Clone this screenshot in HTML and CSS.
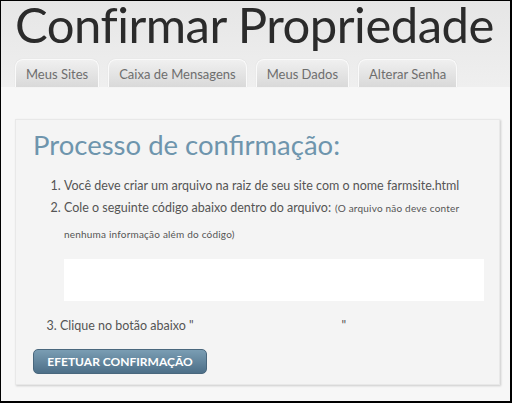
FILE: index.html
```html
<!DOCTYPE html>
<html lang="pt-BR">
<head>
    <meta charset="UTF-8">
    <meta name="viewport" content="width=device-width, initial-scale=1.0">
    <title>Confirmar Propriedade</title>
    <link rel="stylesheet" href="styles.css">
</head>
<body>
    <div class="header">
        <h1>Confirmar Propriedade</h1>
        <div class="tabs">
            <a href="#" class="tab">Meus Sites</a>
            <a href="#" class="tab">Caixa de Mensagens</a>
            <a href="#" class="tab">Meus Dados</a>
            <a href="#" class="tab">Alterar Senha</a>
        </div>
    </div>

    <div class="content">
        <div class="card">
            <h2>Processo de confirmação:</h2>
            <ol class="steps">
                <li>Você deve criar um arquivo na raiz de seu site com o nome farmsite.html</li>
                <li class="two">Cole o seguinte código abaixo dentro do arquivo:<small>(O arquivo não deve conter nenhuma informação além do código)</small>
                    <div class="code-box"></div>
                </li>
                <li class="last">Clique no botão abaixo "<span class="gap"></span>"</li>
            </ol>
            <button class="confirm-btn">Efetuar confirmação</button>
        </div>
    </div>
</body>
</html>
```

FILE: styles.css
```css
html, body {
    margin: 0;
    height: 100%;
}
body {
    font-family: Lato, "Open Sans", sans-serif;
    background-color: #f7f7f7;
    border-top: 1px solid #000;
    border-left: 1px solid #000;
    border-right: 2px solid #000;
    border-bottom: 2px solid #000;
    box-sizing: border-box;
    overflow: hidden;
}
.header {
    background: linear-gradient(#e6e6e6, #efefef);
    padding: 0 0 0 14px;
    height: 86px;
    display: flex;
    flex-direction: column;
    justify-content: flex-end;
}
h1 {
    margin: 0 0 12px 0;
    font-size: 49px;
    font-weight: normal;
    color: #2b2b2b;
    line-height: 46px;
    letter-spacing: -0.5px;
    white-space: nowrap;
}
.tabs {
    display: flex;
    gap: 9px;
}
.tab {
    text-decoration: none;
    color: #6e6e6e;
    font-size: 13px;
    padding: 6px 10px 5px;
    border: 1px solid #fafafa;
    border-bottom: none;
    border-radius: 8px 8px 0 0;
    background: linear-gradient(#f0f0f0, #d9d9d9);
    box-shadow: 0 0 1px rgba(0, 0, 0, 0.15);
}
.content {
    padding: 32px 10px 0 14px;
}
.card {
    background: #f4f4f4;
    border: 1px solid #e8e8e8;
    box-shadow: 1px 1px 2px rgba(0, 0, 0, 0.18);
    padding: 8px 15px 10px 17px;
}
h2 {
    margin: 0 0 14px 0;
    font-size: 27.5px;
    font-weight: normal;
    color: #6e95ad;
}
.steps {
    margin: 0;
    padding: 0 0 0 31px;
    color: #555;
    font-size: 12.5px;
}
.steps li {
    line-height: 22px;
}
.steps li.two {
    line-height: 26px;
    margin-top: -2px;
}
.steps small {
    font-size: 10px;
    letter-spacing: 0.2px;
    margin-left: 4px;
}
.code-box {
    background: #fff;
    height: 42px;
    margin: 12px 0 14px 0;
}
.steps li.last {
    margin-left: -4px;
    margin-bottom: 12px;
}
.gap {
    display: inline-block;
    width: 148px;
}
.confirm-btn {
    font-family: inherit;
    font-size: 12px;
    font-weight: bold;
    text-transform: uppercase;
    color: #fff;
    background: linear-gradient(#7a9db3, #4d6f88);
    border: 1px solid #49677d;
    border-radius: 5px;
    padding: 4px 10px;
    width: 174px;
    height: 25px;
    cursor: pointer;
}
```
